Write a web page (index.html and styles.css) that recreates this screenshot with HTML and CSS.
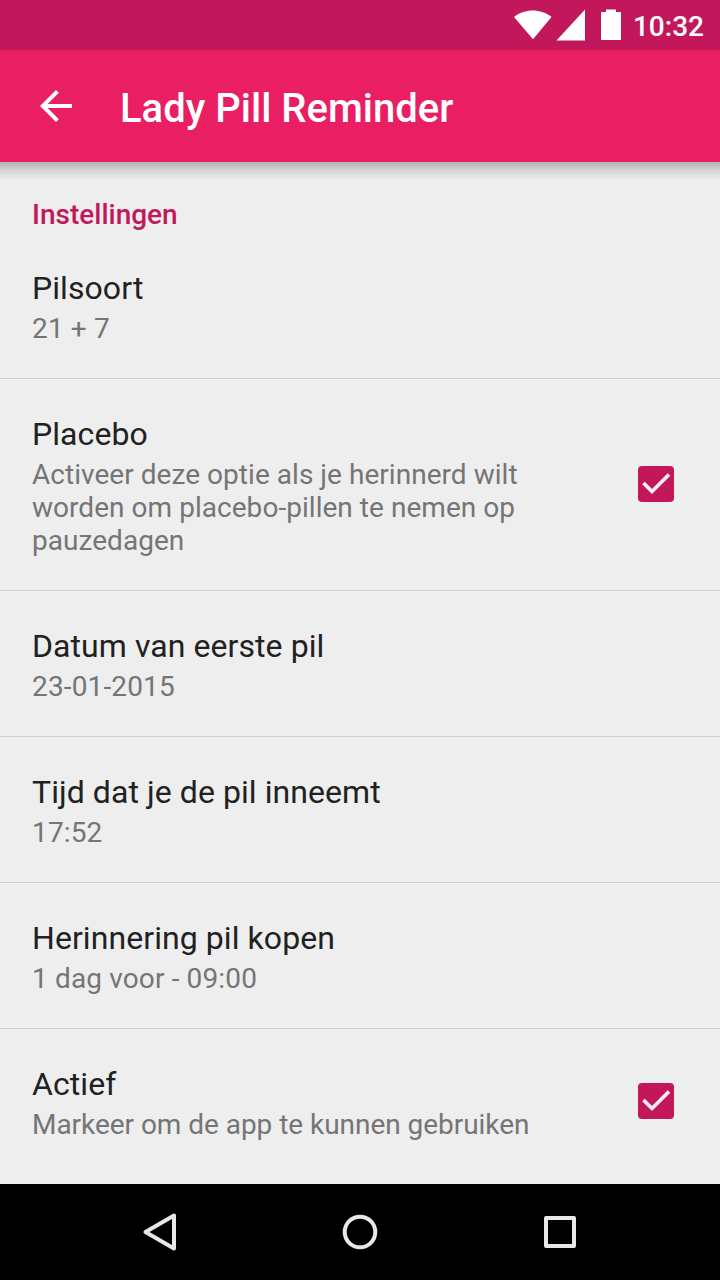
FILE: index.html
```html
<!DOCTYPE html>
<html lang="nl">
  <head>
    <meta charset="UTF-8" />
    <meta name="viewport" content="width=device-width, initial-scale=1.0" />
    <title>Lady Pill Reminder</title>
    <link rel="stylesheet" href="styles.css">
  </head>
  <body>
    <div class="status-bar">
      <svg class="status-icons" width="108" height="50" viewBox="0 0 108 50" fill="#fff">
        <path d="M0 17C10 8.300 27.500 8.300 37.500 17L19 39.300Z" />
        <path d="M42.500 40.500H71V9.500Z" />
        <path d="M87 12H92V9.500H102V12H107V40H87Z" />
      </svg>
      <span class="clock">10:32</span>
    </div>

    <header class="toolbar">
      <svg class="back" width="48" height="48" viewBox="0 0 24 24" fill="#fff">
        <path d="M20 11H7.830l5.590-5.590L12 4l-8 8 8 8 1.410-1.410L7.830 13H20v-2z" />
      </svg>
      <h1>Lady Pill Reminder</h1>
    </header>

    <main class="settings">
      <h2>Instellingen</h2>
      <ul>
        <li class="first">
          <div>
            <h3>Pilsoort</h3>
            <p class="value">21 + 7</p>
          </div>
        </li>
        <li>
          <div>
            <h3>Placebo</h3>
            <p>Activeer deze optie als je herinnerd wilt<br />worden om placebo-pillen te nemen op<br />pauzedagen</p>
          </div>
          <svg class="checkbox" width="36" height="36" viewBox="0 0 36 36">
            <rect width="36" height="36" rx="4" />
            <path d="M5.500 17L14 25.500L31 8.500" />
          </svg>
        </li>
        <li>
          <div>
            <h3>Datum van eerste pil</h3>
            <p class="value">23-01-2015</p>
          </div>
        </li>
        <li>
          <div>
            <h3>Tijd dat je de pil inneemt</h3>
            <p class="value">17:52</p>
          </div>
        </li>
        <li>
          <div>
            <h3>Herinnering pil kopen</h3>
            <p class="value">1 dag voor - 09:00</p>
          </div>
        </li>
        <li>
          <div>
            <h3>Actief</h3>
            <p class="tight">Markeer om de app te kunnen gebruiken</p>
          </div>
          <svg class="checkbox" width="36" height="36" viewBox="0 0 36 36">
            <rect width="36" height="36" rx="4" />
            <path d="M5.500 17L14 25.500L31 8.500" />
          </svg>
        </li>
      </ul>
    </main>

    <nav class="nav-bar">
      <svg width="40" height="40" viewBox="0 0 40 40">
        <path d="M5.500 20L34 3.500V36.500Z" />
      </svg>
      <svg width="40" height="40" viewBox="0 0 40 40">
        <circle cx="20" cy="20" r="15.300" />
      </svg>
      <svg width="40" height="40" viewBox="0 0 40 40">
        <rect x="6" y="6" width="28" height="28" />
      </svg>
    </nav>
  </body>
</html>
```
FILE: styles.css
```css
* {
  margin: 0;
  padding: 0;
  box-sizing: border-box;
}

body {
  display: flex;
  flex-direction: column;
  width: 720px;
  height: 1280px;
  overflow: hidden;
  background: #eee;
  color: #212121;
  font-family: Roboto, sans-serif;
}

.status-bar {
  display: flex;
  justify-content: flex-end;
  align-items: center;
  gap: 11px;
  height: 50px;
  padding-right: 16px;
  background: #c2185b;
}

.clock {
  padding-top: 3px;
  color: #fff;
  font-size: 28px;
  font-weight: 500;
  line-height: 47px;
}

.toolbar {
  display: flex;
  align-items: center;
  gap: 40px;
  height: 112px;
  padding-left: 32px;
  background: #e91e63;
  color: #fff;
}

.toolbar h1 {
  font-size: 40px;
  font-weight: 500;
  line-height: 48px;
  padding-top: 5px;
}

.settings {
  flex: 1;
  background: linear-gradient(#b0b4b3, #d6d8d7 50%, #eee) no-repeat 0 0 / 100% 19px;
}

.settings h2 {
  padding: 36px 32px 0;
  color: #c2185b;
  font-size: 28px;
  font-weight: 500;
  line-height: 33px;
}

ul {
  list-style: none;
}

li {
  display: flex;
  justify-content: space-between;
  align-items: center;
  padding: 34px 46px 33px 32px;
  border-top: 1px solid #cecece;
}

li.first {
  padding-top: 36px;
  border-top: none;
}

h3 {
  margin-bottom: 3px;
  font-size: 32px;
  font-weight: 400;
  letter-spacing: 0.07px;
  line-height: 42px;
}

p {
  color: #757575;
  font-size: 28px;
  letter-spacing: 0.04px;
  line-height: 33px;
}

.value {
  letter-spacing: 0.14px;
}

.tight {
  letter-spacing: -0.04px;
}

.checkbox {
  margin-bottom: 2px;
}

.checkbox rect {
  fill: #c2185b;
}

.checkbox path {
  fill: none;
  stroke: #f5eef1;
  stroke-width: 3.7;
}

.nav-bar {
  display: flex;
  justify-content: center;
  align-items: center;
  gap: 160px;
  height: 96px;
  background: #000;
}

.nav-bar svg {
  fill: none;
  stroke: #e8e8e8;
  stroke-width: 4;
  stroke-linejoin: round;
}
```
